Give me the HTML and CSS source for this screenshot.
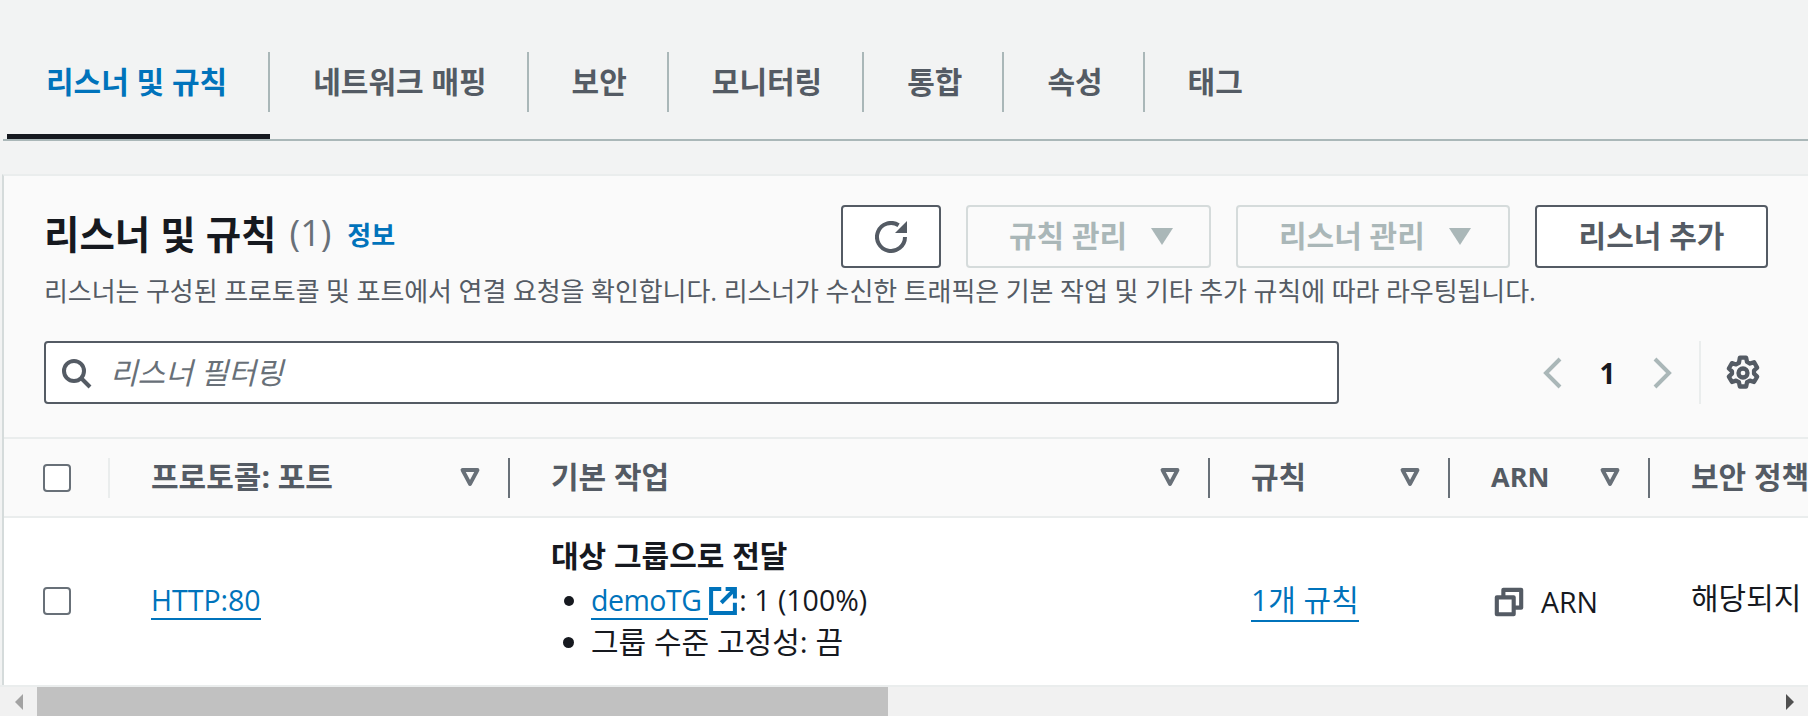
FILE: index.html
```html
<!DOCTYPE html>
<html lang="ko">
<head>
    <meta charset="UTF-8">
    <meta name="viewport" content="width=device-width, initial-scale=1.0">
    <title>리스너 및 규칙</title>
    <link rel="stylesheet" href="styles.css">
</head>
<body>
  <div class="page">
    <ul class="tabs">
      <li class="tab active"><span>리스너 및 규칙</span></li>
      <li class="tab"><span>네트워크 매핑</span></li>
      <li class="tab"><span>보안</span></li>
      <li class="tab"><span>모니터링</span></li>
      <li class="tab"><span>통합</span></li>
      <li class="tab"><span>속성</span></li>
      <li class="tab last"><span>태그</span></li>
    </ul>

    <div class="panel">
      <div class="panel-head">
        <div class="head-top">
          <div class="title">
            <h2>리스너 및 규칙</h2>
            <span class="count">(1)</span>
            <a class="info">정보</a>
          </div>
          <div class="actions">
            <button class="btn btn-icon">
              <svg width="32" height="32" viewBox="0 0 16 16" fill="none" stroke="#545b64" stroke-width="2"><path d="M15 8a7 7 0 1 1-3.200-5.900"/><path d="M16 0v6h-6z" fill="#545b64" stroke="none"/></svg>
            </button>
            <button class="btn disabled btn-rules"><span>규칙 관리</span> <i class="caret"></i></button>
            <button class="btn disabled btn-listeners"><span>리스너 관리</span> <i class="caret"></i></button>
            <button class="btn btn-add"><span>리스너 추가</span></button>
          </div>
        </div>
        <p class="desc">리스너는 구성된 프로토콜 및 포트에서 연결 요청을 확인합니다. 리스너가 수신한 트래픽은 기본 작업 및 기타 추가 규칙에 따라 라우팅됩니다.</p>
        <div class="tools">
          <div class="search">
            <svg width="32" height="32" viewBox="0 0 16 16" fill="none" stroke="#545b64" stroke-width="2"><circle cx="7" cy="7" r="5"/><path d="M10.500 10.500L15 15"/></svg>
            <span class="placeholder">리스너 필터링</span>
          </div>
          <div class="pager">
            <svg class="chev" width="24" height="32" viewBox="0 0 12 16" fill="none" stroke="#aab7b8" stroke-width="2"><path d="M10 1L3 8l7 7"/></svg>
            <span class="page-no">1</span>
            <svg class="chev" width="24" height="32" viewBox="0 0 12 16" fill="none" stroke="#aab7b8" stroke-width="2"><path d="M2 1l7 7-7 7"/></svg>
          </div>
          <div class="prefs">
            <svg width="36" height="36" viewBox="0 0 16 16" fill="none" stroke="#545b64" stroke-width="1.900" stroke-linejoin="round"><circle cx="8" cy="8" r="2"/><path d="M6.600 1.200h2.800l.4 1.900 1.300.7 1.800-.6 1.400 2.400-1.400 1.300v1.400l1.400 1.300-1.400 2.400-1.800-.6-1.300.7-.4 1.900H6.600l-.4-1.900-1.300-.7-1.800.6-1.400-2.400 1.400-1.300V7.300L1.700 6l1.400-2.400 1.800.6 1.300-.7z"/></svg>
          </div>
        </div>
      </div>

      <div class="table-wrap">
        <table class="listeners">
          <colgroup>
            <col class="c-check"><col class="c-proto"><col class="c-action"><col class="c-rules"><col class="c-arn"><col class="c-policy">
          </colgroup>
          <thead>
            <tr>
              <th><div class="cell-head faint"><span class="checkbox"></span></div></th>
              <th><div class="cell-head"><span class="head-text">프로토콜: 포트</span><svg class="sort" width="26" height="26" viewBox="0 0 26 26"><path d="M5.500 6h15l-7.500 14z" fill="none" stroke="#687078" stroke-width="3.800" stroke-linejoin="round"/></svg></div></th>
              <th><div class="cell-head"><span class="head-text">기본 작업</span><svg class="sort" width="26" height="26" viewBox="0 0 26 26"><path d="M5.500 6h15l-7.500 14z" fill="none" stroke="#687078" stroke-width="3.800" stroke-linejoin="round"/></svg></div></th>
              <th><div class="cell-head"><span class="head-text">규칙</span><svg class="sort" width="26" height="26" viewBox="0 0 26 26"><path d="M5.500 6h15l-7.500 14z" fill="none" stroke="#687078" stroke-width="3.800" stroke-linejoin="round"/></svg></div></th>
              <th><div class="cell-head"><span class="head-text en">ARN</span><svg class="sort" width="26" height="26" viewBox="0 0 26 26"><path d="M5.500 6h15l-7.500 14z" fill="none" stroke="#687078" stroke-width="3.800" stroke-linejoin="round"/></svg></div></th>
              <th><div class="cell-head last"><span class="head-text">보안 정책</span></div></th>
            </tr>
          </thead>
          <tbody>
            <tr>
              <td class="check-cell"><span class="checkbox"></span></td>
              <td class="http-cell"><a class="link en tight">HTTP:80</a></td>
              <td>
                <div class="action-title">대상 그룹으로 전달</div>
                <ul class="action-list">
                  <li class="en"><a class="link tight tg">demoTG&nbsp;</a><svg class="ext" width="28" height="28" viewBox="0 0 16 16" fill="none" stroke="#0073bb" stroke-width="2.300"><path d="M7 1.200H1.200v13.600h13.600V9"/><path d="M9.500 1.200h5.300v5.300"/><path d="M14.500 1.500L7 9"/></svg>: 1 (100%)</li>
                  <li>그룹 수준 고정성: 끔</li>
                </ul>
              </td>
              <td class="link-cell"><a class="link">1개 규칙</a></td>
              <td class="arn-cell">
                <div class="arn">
                  <svg width="30" height="30" viewBox="0 0 16 16" fill="none" stroke="#545b64" stroke-width="2.200" stroke-linejoin="round"><path d="M1.500 5.500h9v9h-9z"/><path d="M5 5V1.500h9.500V11H11"/></svg>
                  <span class="en">ARN</span>
                </div>
              </td>
              <td class="policy">해당되지 않음</td>
            </tr>
          </tbody>
        </table>
      </div>
    </div>

    <div class="scrollbar">
      <div class="sb-btn"><i class="arrow-left"></i></div>
      <div class="sb-thumb"></div>
      <div class="sb-rest"></div>
      <div class="sb-btn"><i class="arrow-right"></i></div>
    </div>
  </div>
</body>
</html>
```

FILE: styles.css
```css
*{
    margin: 0;
    padding: 0;
    box-sizing: border-box;
    font-family: "Open Sans", "Noto Sans CJK KR", sans-serif;
}
body{
    background-color: #f2f3f3;
    color: #16191f;
    overflow: hidden;
}
.page{
    width: 1808px;
    height: 716px;
    display: flex;
    flex-direction: column;
    overflow: hidden;
}
.tabs{
    display: flex;
    list-style: none;
    margin: 0 0 33px 3px;
    padding: 52px 0 0 4px;
    height: 141px;
    border-bottom: 2px solid #aab7b8;
    flex-shrink: 0;
}
.tab{
    height: 87px;
    color: #545b64;
    font-size: 30px;
    font-weight: 700;
}
.tab span{
    display: flex;
    align-items: center;
    height: 60px;
    padding: 0 40px 4px 43px;
    border-right: 2px solid #aab7b8;
}
.tab.last span{
    border-right: none;
}
.tab.active{
    color: #0073bb;
    border-bottom: 5px solid #16191f;
}
.tab.active span{
    padding: 0 41px 4px 39px;
}
.panel{
    flex: 1;
    min-height: 0;
    margin-left: 2px;
    background-color: #fafafa;
    border-left: 2px solid #d5dbdb;
    border-top: 2px solid #eaeded;
    display: flex;
    flex-direction: column;
}
.panel-head{
    padding: 29px 40px 0 40px;
    height: 261px;
    flex-shrink: 0;
}
.head-top{
    display: flex;
    justify-content: space-between;
    height: 63px;
}
.title{
    display: flex;
    align-items: center;
    gap: 13px;
    height: 54px;
}
h2{
    font-size: 38.500px;
    font-weight: 700;
}
.count{
    font-size: 36px;
    color: #687078;
}
.info{
    font-size: 26px;
    font-weight: 700;
    color: #0073bb;
    margin: 4px 0 0 3px;
}
.actions{
    display: flex;
    gap: 25px;
}
.btn{
    height: 63px;
    background-color: #fff;
    border: 2px solid #545b64;
    border-radius: 4px;
    color: #545b64;
    font-size: 30px;
    font-weight: 700;
    display: flex;
    align-items: center;
    justify-content: center;
    gap: 24px;
}
.btn span{
    margin-bottom: 5px;
}
.btn-icon{
    width: 100px;
}
.btn-rules{
    width: 245px;
}
.btn-listeners{
    width: 274px;
}
.btn-add{
    width: 233px;
}
.btn.disabled{
    border-color: #d5dbdb;
    color: #aab7b8;
    background-color: #fafafa;
    justify-content: flex-start;
    padding-left: 41px;
}
.caret{
    width: 0;
    height: 0;
    border-left: 11px solid transparent;
    border-right: 11px solid transparent;
    border-top: 17px solid #aab7b8;
}
.desc{
    font-size: 26px;
    color: #545b64;
    line-height: 36px;
    margin-top: 5px;
    white-space: nowrap;
    letter-spacing: -0.090px;
}
.tools{
    display: flex;
    align-items: center;
    margin-top: 32px;
    height: 63px;
}
.search{
    width: 1295px;
    height: 63px;
    background-color: #fff;
    border: 2px solid #545b64;
    border-radius: 4px;
    display: flex;
    align-items: center;
    gap: 18px;
    padding-left: 14px;
}
.placeholder{
    font-size: 30px;
    font-style: italic;
    color: #687078;
    margin-bottom: 4px;
}
.pager{
    display: flex;
    align-items: center;
    margin-left: 201px;
    width: 159px;
    height: 63px;
    justify-content: space-between;
    padding: 0 24px 0 0;
}
.page-no{
    font-size: 28px;
    font-weight: 700;
}
.prefs{
    height: 63px;
    border-left: 2px solid #eaeded;
    padding-left: 24px;
    display: flex;
    align-items: center;
}
.table-wrap{
    flex: 1;
    min-height: 0;
    overflow: hidden;
}
.listeners{
    table-layout: fixed;
    width: 2000px;
    border-collapse: collapse;
}
.c-check{ width: 106px; }
.c-proto{ width: 400px; }
.c-action{ width: 700px; }
.c-rules{ width: 240px; }
.c-arn{ width: 200px; }
.c-policy{ width: 354px; }
.listeners th{
    height: 79px;
    background-color: #fafafa;
    border-top: 2px solid #eaeded;
    border-bottom: 2px solid #eaeded;
    color: #545b64;
    font-size: 30px;
    font-weight: 700;
    text-align: left;
    vertical-align: middle;
}
.cell-head{
    display: flex;
    align-items: center;
    justify-content: space-between;
    height: 40px;
    padding: 0 25px 0 41px;
    border-right: 2px solid #687078;
}
.cell-head.faint{
    border-right-color: #eaeded;
    padding: 0 0 0 39px;
}
.cell-head.last{
    border-right: none;
}
.head-text{
    margin-bottom: 6px;
    white-space: nowrap;
}
.sort{
    margin-bottom: 2px;
}
.checkbox{
    display: block;
    width: 28px;
    height: 28px;
    background-color: #fff;
    border: 2px solid #687078;
    border-radius: 4px;
}
.listeners td{
    height: 168px;
    background-color: #fff;
    font-size: 30px;
    padding: 0 0 5px 41px;
    vertical-align: middle;
}
.listeners td.check-cell{
    padding: 0 0 2px 39px;
}
.listeners td.link-cell{
    padding-bottom: 8px;
}
.listeners td.http-cell{
    padding-bottom: 4px;
}
.listeners td.arn-cell{
    padding-bottom: 0;
}
.listeners td.policy{
    padding-bottom: 12px;
    white-space: nowrap;
}
.en{
    font-size: 28.500px;
}
.head-text.en{
    margin-bottom: 2px;
    font-size: 27px;
}
.link{
    color: #0073bb;
    border-bottom: 2px solid #0073bb;
}
.tight{
    display: inline-block;
    line-height: 35px;
}
.tg{
    letter-spacing: -0.500px;
}
.action-title{
    font-weight: 700;
    line-height: 40px;
    margin-bottom: 4px;
}
.action-list{
    padding-left: 40px;
    list-style: disc;
}
.action-list li{
    line-height: 41px;
}
.ext{
    vertical-align: -4px;
    margin: 0 2px 0 1px;
}
.arn{
    display: flex;
    align-items: center;
    gap: 17px;
    margin-left: 3px;
}
.scrollbar{
    height: 31px;
    flex-shrink: 0;
    background-color: #f1f1f1;
    border-top: 2px solid #eaeded;
    display: flex;
}
.sb-btn{
    width: 37px;
    display: flex;
    align-items: center;
    justify-content: center;
}
.sb-thumb{
    width: 851px;
    background-color: #c1c1c1;
}
.sb-rest{
    flex: 1;
}
.arrow-left{
    border-top: 8px solid transparent;
    border-bottom: 8px solid transparent;
    border-right: 8px solid #a3a3a3;
}
.arrow-right{
    border-top: 8px solid transparent;
    border-bottom: 8px solid transparent;
    border-left: 8px solid #505050;
}
```
